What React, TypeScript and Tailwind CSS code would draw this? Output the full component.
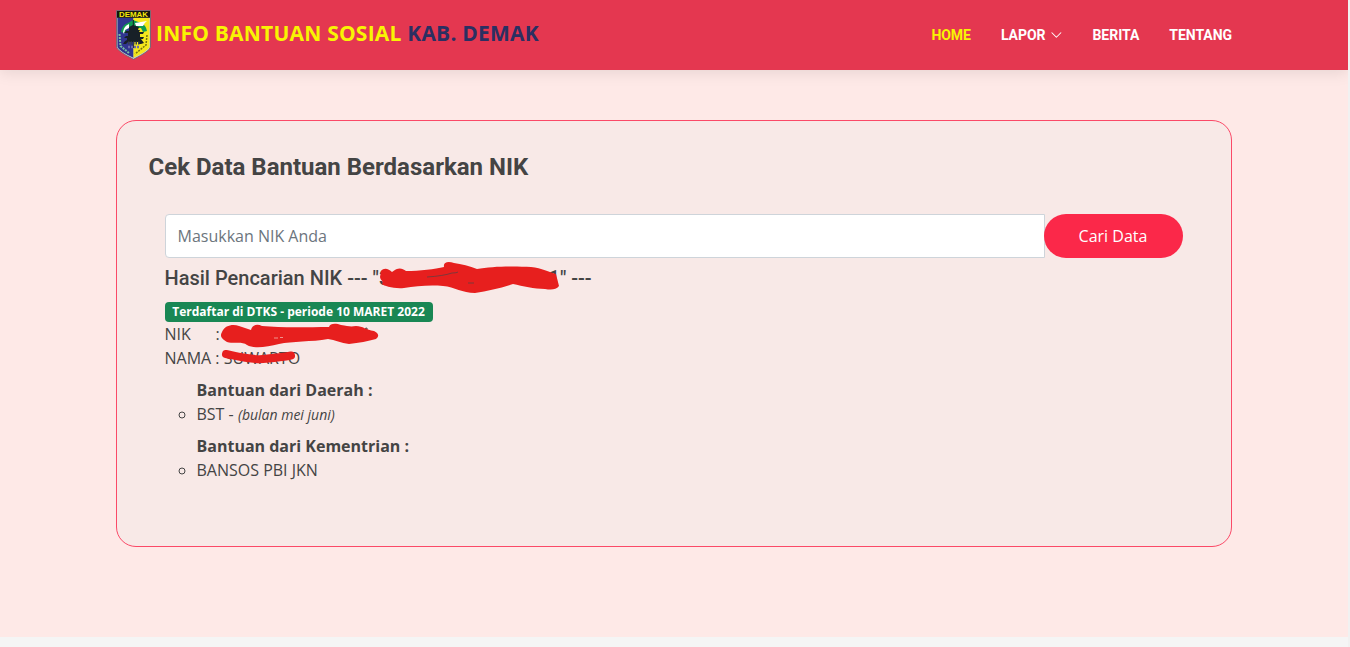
import React from "react";

function Crest() {
  return (
    <svg className="h-[50px] w-[35px] shrink-0" viewBox="0 0 35 50">
      <path d="M0.5 0.5H34.5V37Q34 41 17.5 49.3Q1 41 0.5 37Z" fill="#c9cbd0" stroke="#63616b" strokeWidth="0.8" />
      <path d="M1.5 7.5H17.5V47.8Q3 41 1.5 37Z" fill="#303590" />
      <path d="M17.5 7.5H33.5V37Q32 41 17.5 47.8Z" fill="#f5e71c" />
      <rect x="1" y="1" width="33" height="6.8" fill="#15150f" />
      <text x="17.5" y="6.6" textAnchor="middle" textLength="29" lengthAdjust="spacingAndGlyphs" fontFamily="Liberation Sans, sans-serif" fontWeight="bold" fontSize="6.3" fill="#f4e90c">DEMAK</text>
      <path d="M5 22Q6 15 12 13L17 10L25 13Q30 15 31 21L27 22L25 18L11 18L9 23Z" fill="#109b50" />
      <path d="M7 22Q8 16 13 14L13 18L9 20L8 24ZM19 13L31 11Q28 13 27 16L20 16Z" fill="#fff" />
      <path d="M17.3 10V38" stroke="#171c22" strokeWidth="1" />
      <path d="M13 17L17 15L23 17L22 20H24L23 22H28L27 24H24V27H28L27 29H25L28 33L25 34H23L22 32H12L10 34L7 34L9 31L11 30V28H8L10 26H12V23H8L10 21H13Z" fill="#182027" />
      <path d="M12 33H24" stroke="#39404d" strokeWidth="3" strokeDasharray="1.5 1" />
      <path d="M12 37H24" stroke="#6c6ba8" strokeWidth="2.5" strokeDasharray="2 1" />
      <path d="M3.5 24L4.5 36L13 43" fill="none" stroke="#78bfa0" strokeWidth="2" strokeDasharray="2 1" />
      <path d="M31 25L30 35L19 44" fill="none" stroke="#77720e" strokeWidth="1.5" strokeDasharray="2 1" />
    </svg>
  );
}

function Nav() {
  return (
    <nav className="flex items-center gap-[30px] font-[Roboto,sans-serif] text-[14px] leading-5 font-bold tracking-[-0.04px] text-white">
      <a href="#" className="text-[#f8f403]">HOME</a>
      <a href="#" className="flex items-center gap-[5px]">
        LAPOR
        <svg className="h-3 w-3" viewBox="0 0 16 16" fill="none" stroke="currentColor" strokeWidth="1.4" strokeLinecap="round" strokeLinejoin="round">
          <path d="M2.5 5L8.5 11L14.5 5" />
        </svg>
      </a>
      <a href="#">BERITA</a>
      <a href="#">TENTANG</a>
    </nav>
  );
}

export default function App() {
  return (
    <div className="flex h-[647px] w-full overflow-hidden bg-[#f1f1f1] font-['Open_Sans',sans-serif] text-[16px] leading-6 text-[#444444]">
      <div className="flex w-[1348px] shrink-0 flex-col overflow-hidden bg-[#f5f5f5]">
        <header className="relative flex h-[70px] shrink-0 items-center justify-between bg-[#e43750] px-[116px] shadow-[0_2px_15px_rgba(0,0,0,0.1)]">
          <div className="flex items-center gap-[5px]">
            <Crest />
            <h1 className="pb-[5px] text-[21px] leading-7 font-bold tracking-[0.21px] whitespace-nowrap text-[#f8f403]">
              INFO BANTUAN SOSIAL <span className="text-[#2b2f62]">KAB. DEMAK</span>
            </h1>
          </div>
          <Nav />
        </header>
        <main className="h-[567px] shrink-0 bg-[#fee9e7] px-[116px] pt-[50px]">
          <section className="h-[427px] rounded-[20px] border border-[#fb4967] bg-[#f8e9e7] pt-8 pr-8 pl-[31.5px]">
            <h2 className="font-[Roboto,sans-serif] text-[24px] leading-[29px] font-bold">Cek Data Bantuan Berdasarkan NIK</h2>
            <div className="px-4 pt-8">
              <form className="flex h-11 pl-[0.5px]">
                <input className="w-[880px] rounded-l border border-[#ced4da] bg-white px-[11.5px] outline-none placeholder:text-[#6c757d]" placeholder="Masukkan NIK Anda" />
                <button type="button" className="-ml-px w-[139px] rounded-full bg-[#fb2849] pr-px text-white">Cari Data</button>
              </form>
              <h3 className="mt-2 flex h-6 font-[Roboto,sans-serif] text-[20px] leading-6 font-medium whitespace-pre">
                <span>Hasil Pencarian NIK --- "</span>
                <span className="relative flex w-[181px] justify-between">
                  <span>3</span><span>1</span>
                  <svg className="absolute -top-2 -left-px h-[36px] w-[184px]" viewBox="378 258 184 36">
                    <path d="M381 271C384 267 389 269 392 272C398 267 402 268 406 271C420 271 435 269 444 267C443 262 448 261 454 263C461 264 470 266 477 269C492 266 516 266 531 267C542 268 549 272 556 274L559 286C556 290 551 290 545 289C534 289 523 286 513 284C502 288 488 291 475 293C462 293 455 287 443 286C430 285 416 286 404 288C394 289 384 286 382 284C384 281 380 280 380 277Z" fill="#e71f1e" />
                    <path d="M427 277Q443 276 452 273Q457 273 458 272M468 283L474 283" fill="none" stroke="#514246" strokeWidth="0.7" />
                  </svg>
                </span>
                <span>" ---</span>
              </h3>
              <div className="mt-3 ml-[0.5px] flex h-5 w-[268px] items-center justify-center rounded bg-[#198754] pr-px text-[12px] leading-5 font-bold whitespace-nowrap text-white">Terdaftar di DTKS - periode 10 MARET 2022</div>
              <div className="flex h-6">
                <span className="w-[51px]">NIK</span><span>:</span>
                <span className="relative w-[160px]">
                  <svg className="absolute top-0 left-0 h-[26px] w-[160px]" viewBox="220 322 160 26">
                    <path d="M365 328.5L367 328V331" fill="none" stroke="#444" strokeWidth="1" />
                    <path d="M222 332C225 325 233 324 239 326C243 327 247 329 251 330C252 324 258 324 262 326C282 328 309 327 329 327C330 323 336 323 341 325C348 326 350 327 356 326C363 326 366 330 374 331C378 333 380 336 376 339C368 341 359 343 349 344C341 343 335 340 328 339C312 342 292 341 279 344C267 347 254 349 247 345C242 341 235 344 227 342C223 339 219 337 222 332Z" fill="#e71f1e" />
                    <path d="M274 338H278M280 337.5H283" stroke="#f3c8bf" strokeWidth="0.7" />
                  </svg>
                </span>
              </div>
              <div className="relative h-6">
                NAMA : SUWARTO
                <svg className="absolute top-0 left-[55px] h-[22px] w-[80px]" viewBox="220 346 80 22">
                  <path d="M226 354C240 357 251 360 263 359C275 358 284 357 291 355.5" fill="none" stroke="#e71f1e" strokeWidth="8" strokeLinecap="round" />
                </svg>
              </div>
              <ul className="mt-2 pl-8">
                <li className="list-none font-bold">Bantuan dari Daerah :</li>
                <li className="h-6 list-[circle]">BST - <em className="text-[14px] font-normal">(bulan mei juni)</em></li>
              </ul>
              <ul className="mt-2 pl-8">
                <li className="list-none font-bold">Bantuan dari Kementrian :</li>
                <li className="h-6 list-[circle]">BANSOS PBI JKN</li>
              </ul>
            </div>
          </section>
        </main>
      </div>
    </div>
  );
}
